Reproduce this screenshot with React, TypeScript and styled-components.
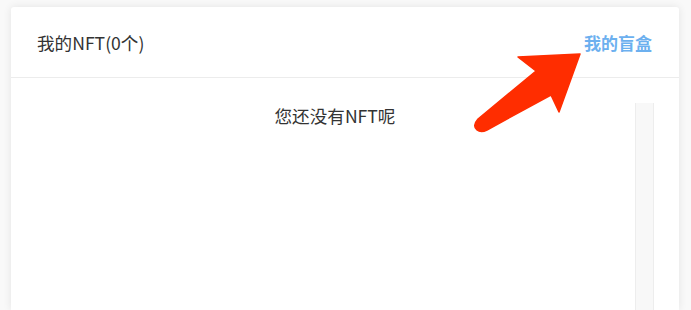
import React from "react";
import styled, { createGlobalStyle } from "styled-components";

const GlobalStyle = createGlobalStyle`
  html, body {
    margin: 0;
    padding: 0;
    height: 310px;
    overflow: hidden;
    background: #f9f9f9;
    font-family: "Noto Sans CJK SC", "Noto Sans", sans-serif;
  }
`;

const Page = styled.div`
  position: relative;
  height: 310px;
  box-sizing: border-box;
  padding: 7px 12px 0 11px;
  display: flex;
  flex-direction: column;
`;

const Card = styled.div`
  background: #fff;
  flex: 1;
  border-radius: 3px 3px 0 0;
  box-shadow: 0 0 8px rgba(0, 0, 0, 0.09);
  display: flex;
  flex-direction: column;
`;

const Header = styled.div`
  height: 71px;
  display: flex;
  align-items: center;
  justify-content: space-between;
  padding: 0 27px 0 26px;
  border-bottom: 1px solid #ececec;
  box-sizing: border-box;
`;

const Title = styled.div`
  font-size: 17.6px;
  color: #333;
`;

const BoxLink = styled.a`
  font-size: 17px;
  font-weight: 700;
  color: #6cb0ef;
  text-decoration: none;
  cursor: pointer;
`;

const Body = styled.div`
  flex: 1;
  display: flex;
  padding: 25px 25px 0 0;
`;

const Main = styled.div`
  flex: 1;
  padding-left: 24px;
  text-align: center;
  font-size: 17.6px;
  line-height: 26px;
  color: #333;
`;

const Track = styled.div`
  width: 17px;
  background: #f8f8f8;
  border-left: 1px solid #ededed;
  border-right: 1px solid #ededed;
`;

const Arrow = styled.svg`
  position: absolute;
  left: 0;
  top: 0;
  pointer-events: none;
`;

export default function App() {
  return (
    <>
      <GlobalStyle />
      <Page>
        <Card>
          <Header>
            <Title>我的NFT(0个)</Title>
            <BoxLink>我的盲盒</BoxLink>
          </Header>
          <Body>
            <Main>您还没有NFT呢</Main>
            <Track />
          </Body>
        </Card>
        <Arrow width="691" height="310" viewBox="0 0 691 310">
          <path
            d="M580 54 L518 57 L536 71 L478 119 Q472 126 477 130 Q481 133 487 130 L551 95 L559 112 Z"
            fill="#ff2d00"
            stroke="#ff2d00"
            strokeWidth="1.5"
            strokeLinejoin="round"
          />
        </Arrow>
      </Page>
    </>
  );
}
